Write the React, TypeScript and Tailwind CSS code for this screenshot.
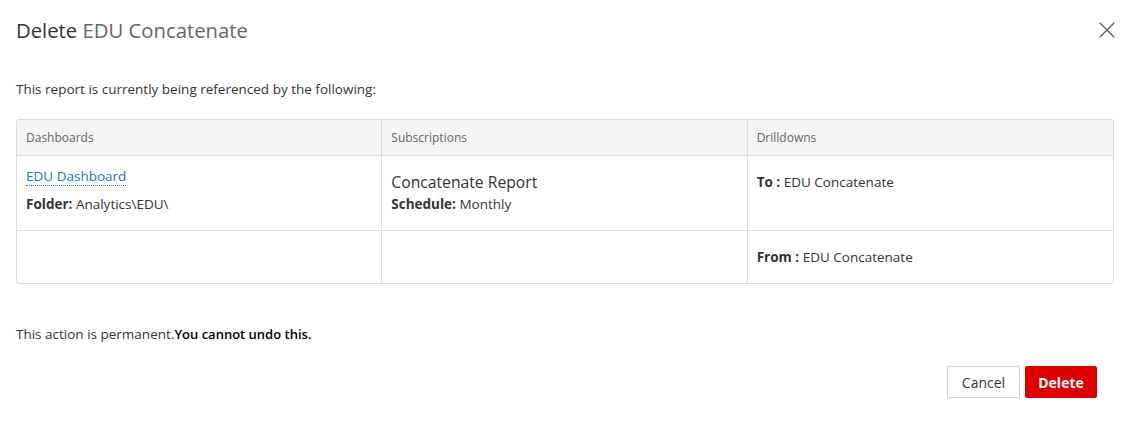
import { X } from "lucide-react";

const font = { fontFamily: '"Open Sans", "Noto Sans", sans-serif' };

export default function App() {
  return (
    <div className="h-[426px] w-[1131px] bg-white text-[#333]" style={font}>
      <div className="flex h-[60px] items-center justify-between pl-4 pr-[10px]">
        <h1 className="text-[20.3px] font-normal text-[#333]">
          Delete <span className="text-[#666]">EDU Concatenate</span>
        </h1>
        <button className="text-[#555]">
          <X size={28} strokeWidth={1} />
        </button>
      </div>

      <div className="px-4">
        <p className="mt-[20px] text-[13.5px] leading-[18px]">
          This report is currently being referenced by the following:
        </p>

        <div className="mt-[21px] w-[1098px] overflow-hidden rounded-[3px] border border-[#dcdcdc]">
          <div className="grid h-[35px] grid-cols-3 bg-[#f5f5f5] text-[12px] text-[#666]">
            <div className="flex items-center border-r border-[#dcdcdc] px-[9px]">Dashboards</div>
            <div className="flex items-center border-r border-[#dcdcdc] px-[9px]">Subscriptions</div>
            <div className="flex items-center px-[9px]">Drilldowns</div>
          </div>
          <div className="grid h-[75px] grid-cols-3 border-t border-[#dcdcdc] text-[13.5px]">
            <div className="border-r border-[#dcdcdc] px-[9px] pt-[10px]">
              <a className="border-b border-dotted border-[#1a6fc9] leading-[17px] text-[#1a6fc9]">EDU Dashboard</a>
              <div className="mt-[9px] leading-[18px]">
                <span className="font-bold">Folder:</span> Analytics\EDU\
              </div>
            </div>
            <div className="border-r border-[#dcdcdc] px-[9px] pt-[16px]">
              <div className="text-[15.7px] leading-[20px]">Concatenate Report</div>
              <div className="mt-[3px] leading-[18px]">
                <span className="font-bold">Schedule:</span> Monthly
              </div>
            </div>
            <div className="px-[9px] pt-[17px] leading-[18px]">
              <span className="font-bold">To :</span> EDU Concatenate
            </div>
          </div>
          <div className="grid h-[53px] grid-cols-3 border-t border-[#dcdcdc] text-[13.5px]">
            <div className="border-r border-[#dcdcdc]" />
            <div className="border-r border-[#dcdcdc]" />
            <div className="flex items-center px-[9px] leading-[18px]">
              <span className="font-bold">From :</span>&nbsp;EDU Concatenate
            </div>
          </div>
        </div>

        <p className="mt-[41px] text-[13.5px] leading-[18px]">
          This action is permanent.<span className="text-[13px] font-semibold text-black">You cannot undo this.</span>
        </p>

        <div className="mt-[23px] flex justify-end gap-[5px] pr-[18px]">
          <button className="h-[32px] w-[73px] rounded-[2px] border border-[#ccc] bg-white text-[14px] text-[#333]">
            Cancel
          </button>
          <button className="h-[32px] w-[72px] rounded-[2px] bg-[#dd0000] text-[14px] font-bold text-white">
            Delete
          </button>
        </div>
      </div>
    </div>
  );
}
